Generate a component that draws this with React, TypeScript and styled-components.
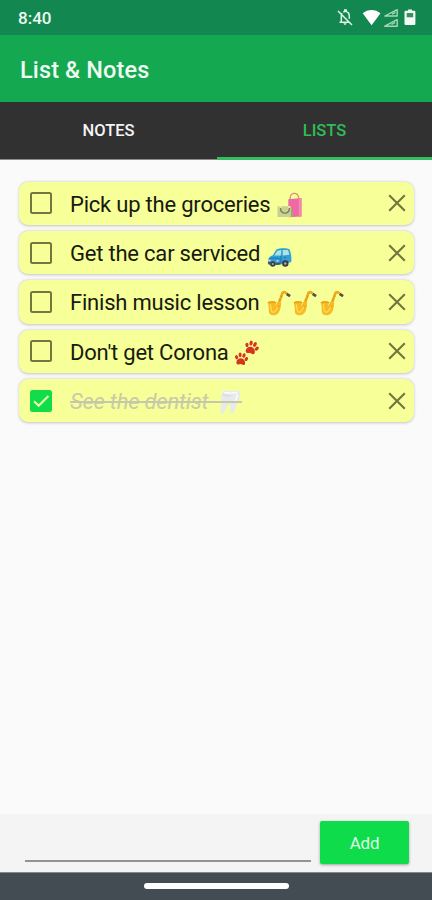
import React from "react";
import styled, { createGlobalStyle } from "styled-components";

const GlobalStyle = createGlobalStyle`
  * { box-sizing: border-box; }
  body { margin: 0; background: #fafafa; font-family: Roboto, sans-serif; }
  button, input { font-family: inherit; border: 0; padding: 0; background: none; }
`;

const Screen = styled.div`
  width: 432px;
  height: 900px;
  display: flex;
  flex-direction: column;
  background: #fafafa;
  overflow: hidden;
`;

const StatusBar = styled.div`
  height: 35px;
  flex: none;
  background: #138750;
  display: flex;
  justify-content: space-between;
  padding-left: 18px;
`;

const Clock = styled.span`
  color: #eefaf2;
  font-size: 17px;
  font-weight: 500;
  line-height: 37px;
`;

const AppBar = styled.header`
  height: 67px;
  flex: none;
  padding-left: 20px;
  background: #14a951;
`;

const Title = styled.h1`
  margin: 0;
  color: #effbf2;
  font-size: 23.5px;
  font-weight: 500;
  line-height: 70px;
  letter-spacing: 0.13px;
`;

const Tabs = styled.nav`
  height: 58px;
  flex: none;
  display: grid;
  grid-template-columns: 217px 215px;
  background: #313131;
  border-bottom: 1px solid #8c8c8c;
`;

const Tab = styled.button<{ $active?: boolean }>`
  height: 58px;
  color: ${(p) => (p.$active ? "#2dbd58" : "#f4f4f4")};
  border-bottom: 3px solid ${(p) => (p.$active ? "#35bd60" : "transparent")};
  font-size: 16.5px;
  font-weight: 500;
  line-height: 55px;
  padding-top: 1px;
`;

const List = styled.ul`
  flex: 1;
  margin: 0;
  padding: 21.7px 18px 0 19px;
  list-style: none;
  display: flex;
  flex-direction: column;
  gap: 5.8px;
`;

const Card = styled.li`
  height: 43.5px;
  flex: none;
  display: flex;
  align-items: center;
  padding: 0 7px 0 11px;
  border-radius: 9px;
  background: #f6ff98;
  box-shadow: 0 0.5px 3px rgba(0, 0, 0, 0.22);
`;

const Box = styled.span<{ $checked?: boolean }>`
  width: 22px;
  height: 22px;
  flex: none;
  display: grid;
  place-items: center;
  border: ${(p) => (p.$checked ? "0" : "2px solid #74763f")};
  border-radius: 2.5px;
  background: ${(p) => (p.$checked ? "#13dc4b" : "transparent")};
`;

const Label = styled.span<{ $done?: boolean }>`
  position: relative;
  display: flex;
  align-items: center;
  margin-left: 18px;
  padding-top: 2.6px;
  white-space: pre;
  font-size: 22px;
  line-height: 28px;
  letter-spacing: -0.21px;
  color: ${(p) => (p.$done ? "#c9cba7" : "#171a0e")};
  font-style: ${(p) => (p.$done ? "italic" : "normal")};
  &::after {
    content: "";
    display: ${(p) => (p.$done ? "block" : "none")};
    position: absolute;
    left: 0;
    right: 0;
    top: 16px;
    height: 1.3px;
    background: #c6c8ac;
  }
`;

const Words = styled.span<{ $width: number }>`
  width: ${(p) => p.$width}px;
`;

const Emojis = styled.span`
  display: flex;
  gap: 2.6px;
  svg { display: block; }
`;

const Remove = styled.button`
  width: 20px;
  height: 20px;
  margin-left: auto;
  svg { display: block; }
`;

const Composer = styled.div`
  height: 58px;
  flex: none;
  display: flex;
  padding: 7px 23px 0 25px;
  background: #f4f4f4;
`;

const Field = styled.input`
  width: 286px;
  height: 41px;
  border-bottom: 2px solid #929292;
  border-radius: 0;
  outline: none;
`;

const Add = styled.button`
  width: 89px;
  height: 43px;
  margin-left: 9px;
  border-radius: 2px;
  background: #0fdc4b;
  color: #dcffe4;
  font-size: 17px;
  letter-spacing: -0.2px;
  line-height: 45px;
  box-shadow: 0 1px 3px rgba(0, 0, 0, 0.35);
`;

const NavBar = styled.div`
  height: 28px;
  flex: none;
  display: flex;
  justify-content: center;
  padding-top: 10px;
  background: #444c53;
  border-top: 1px solid #7e898a;
`;

const Handle = styled.div`
  width: 145px;
  height: 5.5px;
  border-radius: 3px;
  background: #fff;
`;

const StatusIcons = () => (
  <svg width="96" height="35" viewBox="-0.5 0 96 35">
    <g fill="none" stroke="#e0f3e7" strokeWidth="1.5">
      <path d="M1.5 11 15.5 25M3 22.2H13.2M4.8 21.8v-5.5c0-1.3.3-2.3.9-3M6.9 12.1c.4-.3.8-.5 1.3-.6V10h1.5v1.5c2 .5 3.1 2.1 3.1 4.7v2.5" />
    </g>
    <path d="M7 23.2h3c-.2 2-2.8 2-3 0" fill="#e0f3e7" />
    <path d="M26.2 13.3C31 8.8 39 8.8 44 13.3L35.1 25.2Z" fill="#fff" />
    <g fill="none" stroke="#a6d7b9" strokeWidth="1.4" strokeLinejoin="round">
      <path d="M48.3 16 60.7 9.7V16ZM48.3 26.2 60.7 19.7v6.5Z" />
      <path d="m55.5 14.2 3.5-1.8M55 24.5l3.5-1.8" />
    </g>
    <path d="M71.5 9.4h4v1.4h2c1 0 1.4.5 1.4 1.4v11.4c0 1-.5 1.5-1.4 1.5h-8c-1 0-1.5-.5-1.5-1.5V12.2c0-.9.5-1.4 1.5-1.4h2Z" fill="#f4fbf6" />
    <path d="M70.2 13h6.5v4.3h-6.5Z" fill="#34945c" />
  </svg>
);

const Bags = () => (
  <svg width="25" height="26" viewBox="0 0 25 26">
    <path d="M13.2 9V6c0-6.2 8.4-6.2 8.4 0v3" fill="none" stroke="#d89576" strokeWidth="1.3" />
    <path d="M11.3 7.2 24.5 6v18.5l-13.2.8Z" fill="#ef69a4" />
    <path d="M21.8 6.3 24.5 6v18.5l-2.7.2Z" fill="#f589ad" />
    <path d="M.5 14.3H14l2.1 10.8H.5Z" fill="#c6d58d" />
    <path d="M14 14.3 16.1 25h-2.3Z" fill="#92a774" />
    <path d="M3.5 16c.2 6.8 8.7 6.8 9 0" fill="none" stroke="#8d7260" strokeWidth="1.4" />
    <path d="M2.5 14.8h2M11 14.8h2" stroke="#fff2b5" strokeWidth="1.3" />
  </svg>
);

const Car = () => (
  <svg width="25" height="26" viewBox="0 -2.5 25 26">
    <path d="M1.2 17.4c0-3 1.8-5 4.7-5.6L9.3 6c3.5-1.4 9.7-1.7 13.1-.2 1.8 4 2.3 8 1.8 12.8l-3.7 1.2-15.8 2.4-3.4-1.3Z" fill="#329fd6" />
    <path d="m7.3 11.9 3.1-4.7 4-.6-.7 5.5ZM15.8 6.5l5.2.1 1.4 4.7-6.7.8Z" fill="#b1e3e4" />
    <path d="M2 15.3c3.2-1 8-1 10.8 0M13.9 12.6v7M17 13.9h2" stroke="#1677b5" strokeWidth="1" fill="none" />
    <circle cx="5.8" cy="20.5" r="2.7" fill="#373d42" />
    <circle cx="5.8" cy="20.5" r="1.1" fill="#b3aaa1" />
    <circle cx="18.3" cy="20" r="3.2" fill="#373d42" />
    <circle cx="18.3" cy="20" r="1.3" fill="#b3aaa1" />
    <path d="m1 19 2.8.7M8.5 20.5l5-.4" stroke="#4c5150" strokeWidth="2" />
    <path d="M1.5 17h2M9.5 17.4h2" stroke="#f1e2ba" strokeWidth="1.4" />
  </svg>
);

const Sax = () => (
  <svg width="24" height="26" viewBox="0 0 24 26">
    <path d="M10.3 15.5c2.8-4.5 3.9-8.9 5-12.1.8-1.8 2.7-1.7 4.3.1" fill="none" stroke="#efaa18" strokeWidth="2.6" strokeLinejoin="round" />
    <path d="M.4 12.3c3-1.6 6.6-1.6 9.4 0-1.3 1.6-1.5 2.6-.9 3.6l2.5-4.5 2.8 1.2c-.3 5.6-1.4 9.6-3.8 11.4-3 2.1-8 1.7-8.5-2-.4-2.6.5-5.4-1.5-9.7Z" fill="#f8b922" />
    <path d="M3.2 14.3c1.3 2.8.2 6.5 1.9 7.6 2.3 1.3 4.8-2.2 6-6" fill="none" stroke="#ffdc58" strokeWidth="1.3" />
    <path d="M1.2 12.6c2.5-.9 4.8-.9 7.4 0M11.9 9.5l2 .9M13.4 5.9l1.7.8M10.2 16l2 .8" fill="none" stroke="#dc8c10" strokeWidth=".8" />
    <path d="m19.6 3.9 3.5 2.2" stroke="#575140" strokeWidth="2.6" />
  </svg>
);

const Paws = () => (
  <svg width="24" height="26" viewBox="0 0 24 26">
    <defs>
      <g id="paw">
        <path d="M-4.2 4.5C-4-1 3.8-1.3 4.4 4.2 4.7 7 1.8 6.4.4 5.8-1.3 7-4.1 7.4-4.2 4.5Z" />
        <ellipse cx="-4.8" cy="-.1" rx="1.5" ry="2.1" transform="rotate(-24 -4.8 -.1)" />
        <ellipse cx="-1.8" cy="-3" rx="1.5" ry="2.3" transform="rotate(-8 -1.8 -3)" />
        <ellipse cx="2" cy="-3" rx="1.5" ry="2.3" transform="rotate(8 2 -3)" />
        <ellipse cx="4.9" cy="0" rx="1.5" ry="2.1" transform="rotate(24 4.9 0)" />
      </g>
    </defs>
    <g fill="#d7341f">
      <use href="#paw" transform="translate(16.8 6.8) rotate(20) scale(1.08)" />
      <use href="#paw" transform="translate(6.4 18.2) rotate(10) scale(1.02)" />
    </g>
  </svg>
);

const Tooth = () => (
  <svg width="24" height="26" viewBox="0 0 24 26">
    <path d="M4.2 3.5C5.8.4 9.5 1.5 13 2.5c3.2-.6 8.2-1.9 9.2 1.5.7 3.4-1.8 7-3.5 11.3-1.6 4.2-2.3 9-4.8 9.4-2.9.2.3-8.1-2.2-9.2-3.2-.8-4.5 8.4-7.9 9.1-2.5.2-.9-5.3-.3-9C4 11.3 2.4 7.3 4.2 3.5Z" fill="#e6e9ee" />
    <path d="M5 5.3c3.2 2.1 5.4 2 8.3.8M10 14c1.3-1.3 3-1.3 4.1.1" stroke="#ced4df" strokeWidth="1" fill="none" />
    <path d="M6 3.8c2-1.2 4.1.3 6.5.5 2.4.1 4.7-1.1 7-.9M19.5 5c.2 3.1-2.1 6.2-3.1 9" stroke="#fafbfd" strokeWidth="1.5" fill="none" />
  </svg>
);

const items = [
  { text: "Pick up the groceries", width: 207, emoji: <Bags /> },
  { text: "Get the car serviced", width: 197, emoji: <Car /> },
  { text: "Finish music lesson", width: 196.5, emoji: <><Sax /><Sax /><Sax /></> },
  { text: "Don't get Corona", width: 165, emoji: <Paws /> },
  { text: "See the dentist", width: 148, emoji: <Tooth />, done: true },
];

export default function App() {
  return (
    <>
      <GlobalStyle />
      <Screen>
        <StatusBar>
          <Clock>8:40</Clock>
          <StatusIcons />
        </StatusBar>
        <AppBar><Title>List &amp; Notes</Title></AppBar>
        <Tabs>
          <Tab>NOTES</Tab>
          <Tab $active>LISTS</Tab>
        </Tabs>
        <List>
          {items.map((item) => (
            <Card key={item.text}>
              <Box $checked={item.done}>
                {item.done && (
                  <svg width="22" height="22" viewBox="0 0 22 22">
                    <path d="m4 11.3 4.7 4.4L18.4 6" fill="none" stroke="#e2ffa4" strokeWidth="2.2" />
                  </svg>
                )}
              </Box>
              <Label $done={item.done}>
                <Words $width={item.width}>{item.text}</Words>
                <Emojis>{item.emoji}</Emojis>
              </Label>
              <Remove aria-label="Remove">
                <svg width="20" height="20" viewBox="0 0 20 20">
                  <path d="m2.2 2.2 15.6 15.6M17.8 2.2 2.2 17.8" stroke="#73763b" strokeWidth="2.1" />
                </svg>
              </Remove>
            </Card>
          ))}
        </List>
        <Composer>
          <Field aria-label="New item" />
          <Add>Add</Add>
        </Composer>
        <NavBar><Handle /></NavBar>
      </Screen>
    </>
  );
}
